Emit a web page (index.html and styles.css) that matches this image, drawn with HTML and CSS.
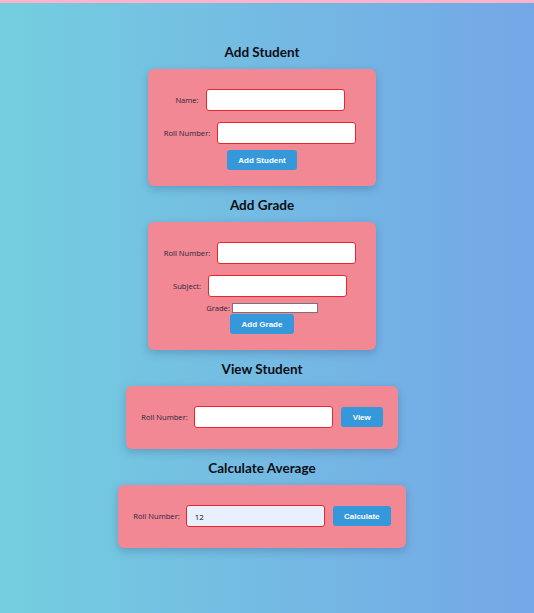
FILE: index.html
```html
<!DOCTYPE html>
<html lang="en">
<head>
<meta charset="utf-8">
<title>Student Grades</title>
<link rel="stylesheet" href="styles.css">
</head>
<body>
<main class="page">
  <h2 class="title">Add Student</h2>
  <section class="card card-stack">
    <div class="row"><label class="lbl">Name:</label><input class="field" type="text"></div>
    <div class="row row-last"><label class="lbl">Roll Number:</label><input class="field" type="text"></div>
    <button class="btn btn-add-student">Add Student</button>
  </section>

  <h2 class="title">Add Grade</h2>
  <section class="card card-stack">
    <div class="row"><label class="lbl">Roll Number:</label><input class="field" type="text"></div>
    <div class="row row-subject"><label class="lbl">Subject:</label><input class="field" type="text"></div>
    <div class="row row-grade"><label class="lbl lbl-grade">Grade:</label><input class="plain" type="text"></div>
    <button class="btn btn-add-grade">Add Grade</button>
  </section>

  <h2 class="title">View Student</h2>
  <section class="card card-inline">
    <label class="lbl">Roll Number:</label><input class="field" type="text"><button class="btn btn-view">View</button>
  </section>

  <h2 class="title">Calculate Average</h2>
  <section class="card card-inline">
    <label class="lbl">Roll Number:</label><input class="field filled" type="text" value="12"><button class="btn btn-calc">Calculate</button>
  </section>
</main>
</body>
</html>
```

FILE: styles.css
```css
html, body {
  margin: 0;
  padding: 0;
}
body {
  min-height: 100vh;
  box-sizing: border-box;
  border-top: 3px solid #fdb3c9;
  background: linear-gradient(to right, #74cedf, #74a7e7);
  font-family: "Open Sans", "Noto Sans", sans-serif;
  color: #2a2a3a;
}
.page {
  display: flex;
  flex-direction: column;
  align-items: center;
  padding: 30px 10px 0 0;
}
.title {
  margin: 11px 0 9px;
  height: 16px;
  line-height: 16px;
  font-family: "Lato", "Open Sans", sans-serif;
  font-size: 13.5px;
  font-weight: 700;
  color: #0d0d14;
}
.card {
  background: #f28893;
  border-radius: 6px;
  box-shadow: 0 3px 8px rgba(40, 60, 110, 0.28);
  box-sizing: border-box;
}
.card-stack {
  width: 228px;
  padding: 20px 0 16px;
  display: flex;
  flex-direction: column;
  align-items: center;
}
.row {
  display: flex;
  align-items: center;
  justify-content: center;
  height: 22px;
  margin-bottom: 11px;
  padding-right: 4px;
}
.row-last,
.row-subject {
  margin-bottom: 6px;
}
.row-grade {
  height: 12px;
  margin: -1px 0 0 0;
  padding-right: 0;
}
.lbl {
  font-size: 7.6px;
  color: #262640;
  margin-right: 7px;
  white-space: nowrap;
}
.lbl-grade {
  margin-right: 2px;
}
.field {
  width: 139px;
  height: 22px;
  box-sizing: border-box;
  border: 1px solid #e8262b;
  border-radius: 3px;
  background: #fff;
  padding: 0 8px;
  font-family: "Open Sans", "Noto Sans", sans-serif;
  font-size: 8px;
  color: #111;
  outline: none;
}
.filled {
  background: #e8f0fe;
}
.plain {
  width: 86px;
  height: 10px;
  box-sizing: border-box;
  border: 1px solid #767676;
  background: #fff;
  padding: 0;
  font-size: 6px;
}
.btn {
  height: 20px;
  border: none;
  border-radius: 3px;
  background: #3498db;
  color: #fff;
  font-family: "Liberation Sans", Arial, sans-serif;
  font-size: 8px;
  font-weight: 700;
  padding: 0;
}
.btn-add-student { width: 70px; }
.btn-add-grade { width: 64px; }
.btn-view { width: 42px; }
.btn-calc { width: 58px; }
.card-inline {
  display: flex;
  align-items: center;
  padding: 20px 15px 21px;
}
.card-inline .lbl {
  margin-right: 6px;
}
.card-inline .field {
  margin-right: 8px;
}
```
